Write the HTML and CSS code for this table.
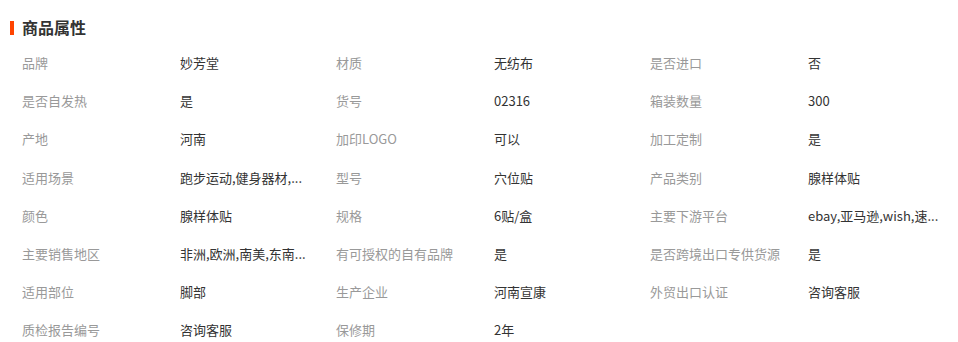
FILE: index.html
```html
<!DOCTYPE html>
<html lang="zh-CN">
<head>
<meta charset="utf-8">
<title>商品属性</title>
<link rel="stylesheet" href="styles.css">
</head>
<body>
<section class="attrs">
  <h2 class="attrs-title">商品属性</h2>
  <div class="attrs-grid">
    <div class="k">品牌</div><div class="v">妙芳堂</div>
    <div class="k">材质</div><div class="v">无纺布</div>
    <div class="k">是否进口</div><div class="v">否</div>

    <div class="k">是否自发热</div><div class="v">是</div>
    <div class="k">货号</div><div class="v">02316</div>
    <div class="k">箱装数量</div><div class="v">300</div>

    <div class="k">产地</div><div class="v">河南</div>
    <div class="k">加印LOGO</div><div class="v">可以</div>
    <div class="k">加工定制</div><div class="v">是</div>

    <div class="k">适用场景</div><div class="v">跑步运动,健身器材,...</div>
    <div class="k">型号</div><div class="v">穴位贴</div>
    <div class="k">产品类别</div><div class="v">腺样体贴</div>

    <div class="k">颜色</div><div class="v">腺样体贴</div>
    <div class="k">规格</div><div class="v">6贴/盒</div>
    <div class="k">主要下游平台</div><div class="v">ebay,亚马逊,wish,速...</div>

    <div class="k">主要销售地区</div><div class="v">非洲,欧洲,南美,东南...</div>
    <div class="k">有可授权的自有品牌</div><div class="v">是</div>
    <div class="k">是否跨境出口专供货源</div><div class="v">是</div>

    <div class="k">适用部位</div><div class="v">脚部</div>
    <div class="k">生产企业</div><div class="v">河南宣康</div>
    <div class="k">外贸出口认证</div><div class="v">咨询客服</div>

    <div class="k">质检报告编号</div><div class="v">咨询客服</div>
    <div class="k">保修期</div><div class="v">2年</div>
  </div>
</section>
</body>
</html>
```
FILE: styles.css
```css
html, body {
  margin: 0;
  padding: 0;
  background: #fff;
}

body {
  font-family: "Noto Sans CJK SC", "Noto Sans", sans-serif;
  font-size: 13px;
  color: #333;
}

.attrs {
  padding: 17px 0 0 10px;
}

.attrs-title {
  display: flex;
  align-items: center;
  margin: 0;
  font-size: 16px;
  font-weight: bold;
  line-height: 21px;
  color: #333;
}

.attrs-title::before {
  content: "";
  width: 4px;
  height: 14px;
  margin-right: 8px;
  background: #ff4400;
}

.attrs-grid {
  display: grid;
  grid-template-columns: 158px 156px 158px 156px 158px 156px;
  grid-auto-rows: 38.2px;
  margin-top: 6px;
  padding-left: 12px;
  align-items: center;
}

.k {
  color: #999;
  white-space: nowrap;
  line-height: 18px;
}

.v {
  color: #333;
  white-space: nowrap;
  line-height: 18px;
}
```
